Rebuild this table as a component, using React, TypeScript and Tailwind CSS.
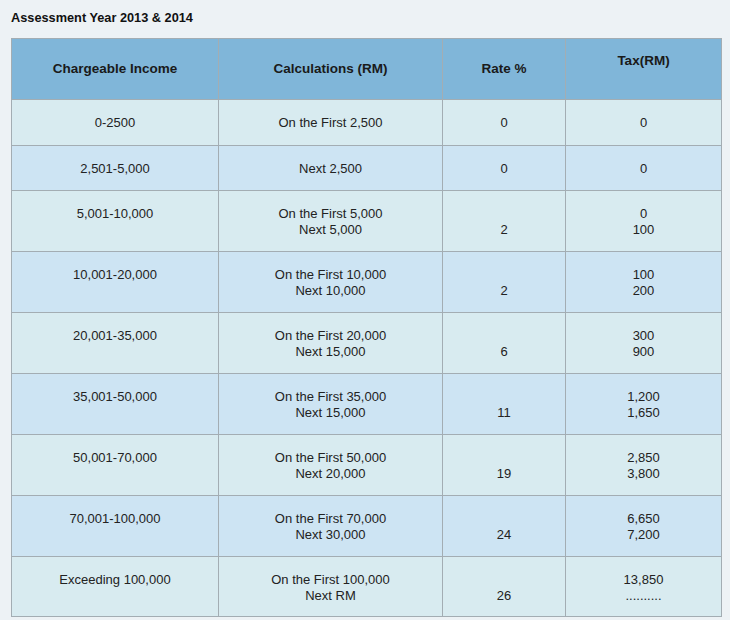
const rows = [
  { income: "0-2500", calc: ["On the First 2,500"], rate: "0", tax: ["0"], h: "h-[46px]" },
  { income: "2,501-5,000", calc: ["Next 2,500"], rate: "0", tax: ["0"], h: "h-[45px]" },
  { income: "5,001-10,000", calc: ["On the First 5,000", "Next 5,000"], rate: "2", tax: ["0", "100"], h: "h-[61px]" },
  { income: "10,001-20,000", calc: ["On the First 10,000", "Next 10,000"], rate: "2", tax: ["100", "200"], h: "h-[61px]" },
  { income: "20,001-35,000", calc: ["On the First 20,000", "Next 15,000"], rate: "6", tax: ["300", "900"], h: "h-[61px]" },
  { income: "35,001-50,000", calc: ["On the First 35,000", "Next 15,000"], rate: "11", tax: ["1,200", "1,650"], h: "h-[61px]" },
  { income: "50,001-70,000", calc: ["On the First 50,000", "Next 20,000"], rate: "19", tax: ["2,850", "3,800"], h: "h-[61px]" },
  { income: "70,001-100,000", calc: ["On the First 70,000", "Next 30,000"], rate: "24", tax: ["6,650", "7,200"], h: "h-[61px]" },
  { income: "Exceeding 100,000", calc: ["On the First 100,000", "Next RM"], rate: "26", tax: ["13,850", ".........."], h: "h-[60px]" },
];

export default function App() {
  return (
    <div className="h-[620px] w-[730px] bg-[#edf2f5] font-['Liberation_Sans',Arial,sans-serif] text-[13px] leading-4 text-[#222]">
      <div className="px-[11px] pt-[10px] pb-[12px] text-[12.75px] font-bold text-[#111]">
        Assessment Year 2013 &amp; 2014
      </div>
      <table className="ml-[11px] w-[710px] table-fixed border-collapse border border-[#a3adb3]">
        <colgroup>
          <col className="w-[207px]" />
          <col className="w-[224px]" />
          <col className="w-[123px]" />
          <col className="w-[156px]" />
        </colgroup>
        <thead>
          <tr className="h-[61px] bg-[#80b6d9] text-[13.5px] font-bold text-[#1a1a1a]">
            <th className="border border-[#a3adb3] text-center align-middle">Chargeable Income</th>
            <th className="border border-[#a3adb3] text-center align-middle">Calculations (RM)</th>
            <th className="border border-[#a3adb3] text-center align-middle">Rate %</th>
            <th className="border border-[#a3adb3] text-center align-middle">
              Tax(RM)
              <br />
              &nbsp;
            </th>
          </tr>
        </thead>
        <tbody>
          {rows.map((r, i) => {
            const two = r.calc.length > 1;
            return (
              <tr key={r.income} className={`${r.h} ${i % 2 === 0 ? "bg-[#d8ebf0]" : "bg-[#cde4f3]"}`}>
                <td className="border border-[#a3adb3] pt-[15px] text-center align-top">{r.income}</td>
                <td className="border border-[#a3adb3] pt-[15px] text-center align-top">
                  {r.calc.map((c) => (
                    <div key={c}>{c}</div>
                  ))}
                </td>
                <td className="border border-[#a3adb3] pt-[15px] text-center align-top">
                  {two && <div>&nbsp;</div>}
                  <div>{r.rate}</div>
                </td>
                <td className="border border-[#a3adb3] pt-[15px] text-center align-top">
                  {r.tax.map((t) => (
                    <div key={t}>{t}</div>
                  ))}
                </td>
              </tr>
            );
          })}
        </tbody>
      </table>
    </div>
  );
}
